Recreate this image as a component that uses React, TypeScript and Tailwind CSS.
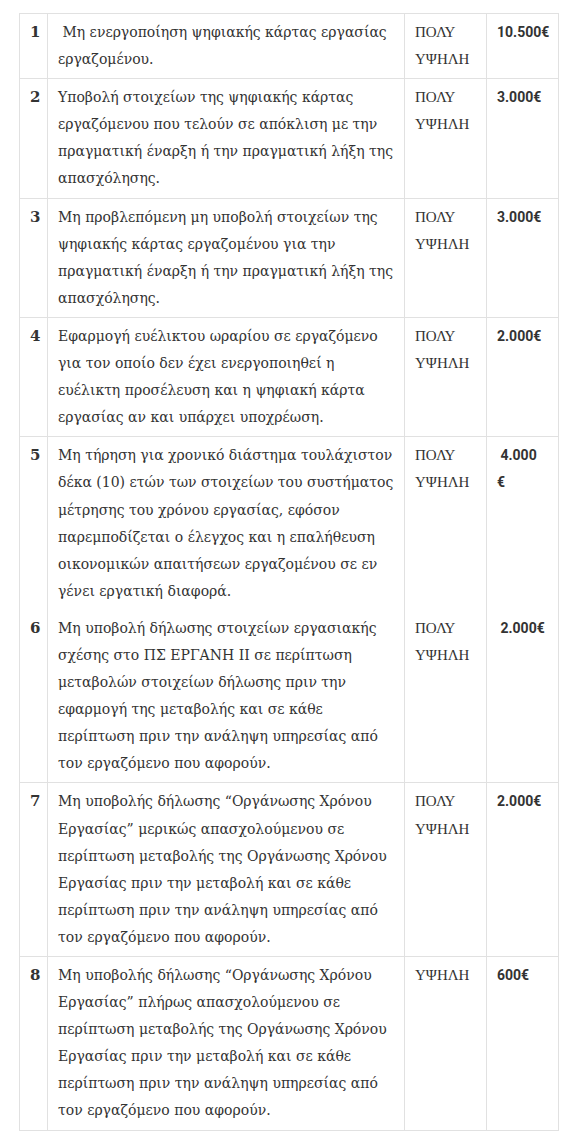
import React from "react";

type Row = {
  no: string;
  lines: string[];
  level: string[];
  fine: string[];
  noBorder?: boolean;
  noTop?: boolean;
};

const rows: Row[] = [
  {
    no: "1",
    lines: ["\u00a0Μη ενεργοποίηση ψηφιακής κάρτας εργασίας", "εργαζομένου."],
    level: ["ΠΟΛΥ", "ΥΨΗΛΗ"],
    fine: ["10.500€"],
  },
  {
    no: "2",
    lines: [
      "Υποβολή στοιχείων της ψηφιακής κάρτας",
      "εργαζόμενου που τελούν σε απόκλιση με την",
      "πραγματική έναρξη ή την πραγματική λήξη της",
      "απασχόλησης.",
    ],
    level: ["ΠΟΛΥ", "ΥΨΗΛΗ"],
    fine: ["3.000€"],
  },
  {
    no: "3",
    lines: [
      "Μη προβλεπόμενη μη υποβολή στοιχείων της",
      "ψηφιακής κάρτας εργαζομένου για την",
      "πραγματική έναρξη ή την πραγματική λήξη της",
      "απασχόλησης.",
    ],
    level: ["ΠΟΛΥ", "ΥΨΗΛΗ"],
    fine: ["3.000€"],
  },
  {
    no: "4",
    lines: [
      "Εφαρμογή ευέλικτου ωραρίου σε εργαζόμενο",
      "για τον οποίο δεν έχει ενεργοποιηθεί η",
      "ευέλικτη προσέλευση και η ψηφιακή κάρτα",
      "εργασίας αν και υπάρχει υποχρέωση.",
    ],
    level: ["ΠΟΛΥ", "ΥΨΗΛΗ"],
    fine: ["2.000€"],
  },
  {
    no: "5",
    lines: [
      "Μη τήρηση για χρονικό διάστημα τουλάχιστον",
      "δέκα (10) ετών των στοιχείων του συστήματος",
      "μέτρησης του χρόνου εργασίας, εφόσον",
      "παρεμποδίζεται ο έλεγχος και η επαλήθευση",
      "οικονομικών απαιτήσεων εργαζομένου σε εν",
      "γένει εργατική διαφορά.",
    ],
    level: ["ΠΟΛΥ", "ΥΨΗΛΗ"],
    fine: ["\u00a04.000", "€"],
    noBorder: true,
  },
  {
    no: "6",
    lines: [
      "Μη υποβολή δήλωσης στοιχείων εργασιακής",
      "σχέσης στο ΠΣ ΕΡΓΑΝΗ ΙΙ σε περίπτωση",
      "μεταβολών στοιχείων δήλωσης πριν την",
      "εφαρμογή της μεταβολής και σε κάθε",
      "περίπτωση πριν την ανάληψη υπηρεσίας από",
      "τον εργαζόμενο που αφορούν.",
    ],
    level: ["ΠΟΛΥ", "ΥΨΗΛΗ"],
    fine: ["\u00a02.000€"],
    noTop: true,
  },
  {
    no: "7",
    lines: [
      "Μη υποβολής δήλωσης “Οργάνωσης Χρόνου",
      "Εργασίας” μερικώς απασχολούμενου σε",
      "περίπτωση μεταβολής της Οργάνωσης Χρόνου",
      "Εργασίας πριν την μεταβολή και σε κάθε",
      "περίπτωση πριν την ανάληψη υπηρεσίας από",
      "τον εργαζόμενο που αφορούν.",
    ],
    level: ["ΠΟΛΥ", "ΥΨΗΛΗ"],
    fine: ["2.000€"],
  },
  {
    no: "8",
    lines: [
      "Μη υποβολής δήλωσης “Οργάνωσης Χρόνου",
      "Εργασίας” πλήρως απασχολούμενου σε",
      "περίπτωση μεταβολής της Οργάνωσης Χρόνου",
      "Εργασίας πριν την μεταβολή και σε κάθε",
      "περίπτωση πριν την ανάληψη υπηρεσίας από",
      "τον εργαζόμενο που αφορούν.",
    ],
    level: ["ΥΨΗΛΗ"],
    fine: ["600€"],
  },
];

// one block per visual line so the wrap matches the original
function Lines({ items }: { items: string[] }) {
  return (
    <>
      {items.map((l, i) => (
        <span key={i} className="block whitespace-nowrap">
          {l}
        </span>
      ))}
    </>
  );
}

export default function App() {
  return (
    <div className="min-h-[1145px] w-[570px] bg-white pt-[13px] pl-[19px] font-['DejaVu_Serif',serif] text-[14px] leading-[27.1px] text-[#333]">
      <table className="w-[539px] table-fixed border-collapse">
        <colgroup>
          <col className="w-[28px]" />
          <col className="w-[357px]" />
          <col className="w-[82px]" />
          <col className="w-[72px]" />
        </colgroup>
        <tbody>
          {rows.map((r) => {
            const bb = `${r.noBorder ? "border-b-0" : ""} ${r.noTop ? "border-t-0" : ""}`;
            return (
              <tr key={r.no}>
                <td className={`border border-[#e1e1e1] px-[10px] py-[5px] align-top text-[15px] font-bold ${bb}`}>
                  {r.no}
                </td>
                <td className={`border border-[#e1e1e1] px-[10px] py-[5px] align-top ${bb}`}>
                  <Lines items={r.lines} />
                </td>
                <td className={`border border-[#e1e1e1] px-[10px] py-[5px] align-top font-['Liberation_Serif',serif] text-[15px] ${bb}`}>
                  <Lines items={r.level} />
                </td>
                <td className={`border border-[#e1e1e1] px-[10px] py-[5px] align-top font-['Roboto',sans-serif] text-[14px] font-bold ${bb}`}>
                  <Lines items={r.fine} />
                </td>
              </tr>
            );
          })}
        </tbody>
      </table>
    </div>
  );
}
